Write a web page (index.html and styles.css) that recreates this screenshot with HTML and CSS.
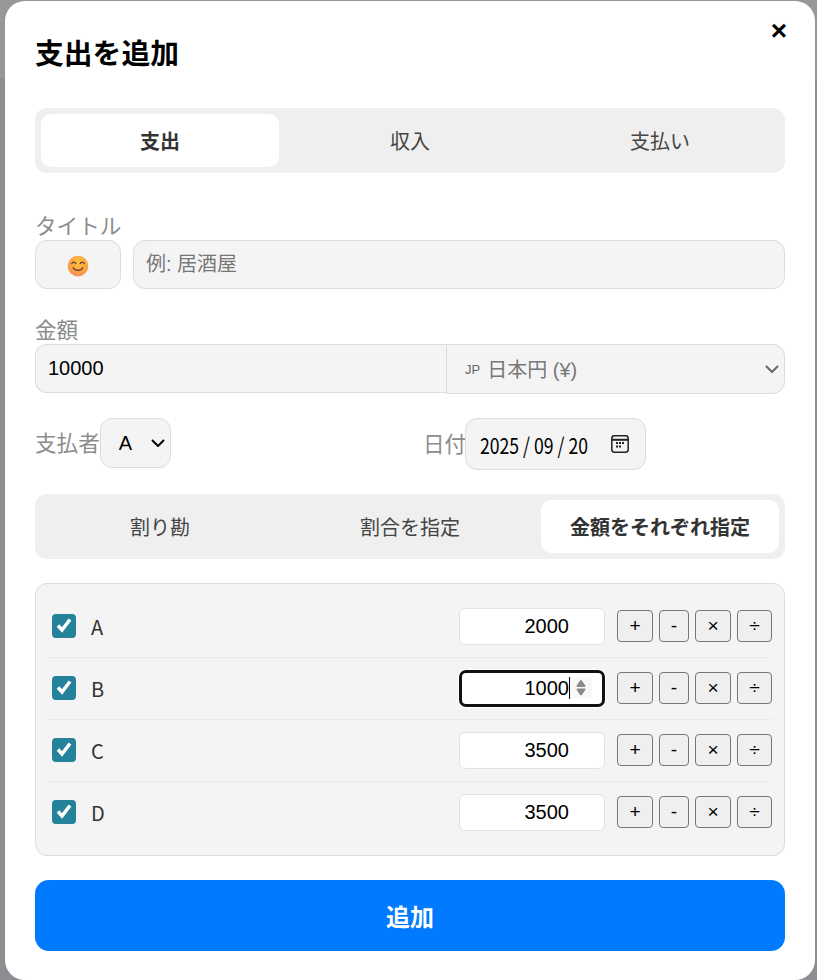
FILE: index.html
```html
<!DOCTYPE html>
<html lang="ja">
    <head>
        <meta charset="UTF-8" />
        <title>支出を追加</title>
        <link rel="stylesheet" href="styles.css">
    </head>
    <body>
        <div class="modal">
            <button class="close" type="button">×</button>
            <h2 class="modal-title">支出を追加</h2>

            <div class="tabs type-tabs">
                <div class="tab active">支出</div>
                <div class="tab">収入</div>
                <div class="tab">支払い</div>
            </div>

            <label class="field-label title-label">タイトル</label>
            <div class="title-row">
                <button class="emoji-btn" type="button">
                    <svg width="22" height="22" viewBox="0 0 22 22">
                        <defs>
                            <radialGradient id="face" cx="0.55" cy="0.35" r="0.75">
                                <stop offset="0" stop-color="#fdc33c" />
                                <stop offset="0.65" stop-color="#fc9e42" />
                                <stop offset="0.92" stop-color="#f97f5c" />
                                <stop offset="1" stop-color="#f2668c" />
                            </radialGradient>
                        </defs>
                        <circle cx="11" cy="11" r="10.3" fill="url(#face)" />
                        <path d="M4.8 8.6c.9-2 3.1-2 4 0M13.2 8.6c.9-2 3.1-2 4 0" fill="none" stroke="#5b3a45" stroke-width="1.3" stroke-linecap="round" />
                        <path d="M6.2 12.8c1.8 3.4 7.8 3.4 9.6 0" fill="none" stroke="#5b3a45" stroke-width="1.3" stroke-linecap="round" />
                    </svg>
                </button>
                <input class="text-input title-input" type="text" placeholder="例: 居酒屋" />
            </div>

            <label class="field-label amount-label">金額</label>
            <div class="amount-row">
                <input class="text-input amount-input" type="text" value="10000" />
                <div class="currency">
                    <span class="flag">JP</span>
                    <span class="currency-name">日本円 (¥)</span>
                    <svg class="currency-arrow" width="14" height="8" viewBox="0 0 14 8">
                        <path d="M1 1l6 6 6-6" fill="none" stroke="#666" stroke-width="2" />
                    </svg>
                </div>
            </div>

            <div class="payer-row">
                <div class="payer-col">
                    <label class="field-label">支払者</label>
                    <select class="payer"><option>A</option><option>B</option></select>
                </div>
                <div class="date-col">
                    <label class="field-label">日付</label>
                    <div class="date">
                        <span class="date-text">2025<span class="date-sep">/</span>09<span class="date-sep">/</span>20</span>
                        <svg class="date-icon" width="18" height="18" viewBox="0 0 18 18">
                            <rect x="0.8" y="0.8" width="16.4" height="16.4" rx="2.6" fill="none" stroke="#222" stroke-width="1.5" />
                            <path d="M1 4.8h16" stroke="#222" stroke-width="2" />
                            <path d="M5 8h2M8 8h2M11 8h2M5 11.5h2M8 11.5h2" stroke="#222" stroke-width="1.8" />
                        </svg>
                    </div>
                </div>
            </div>

            <div class="tabs split-tabs">
                <div class="tab">割り勘</div>
                <div class="tab">割合を指定</div>
                <div class="tab active">金額をそれぞれ指定</div>
            </div>

            <div class="members">
                <div class="member">
                    <input class="check" type="checkbox" checked />
                    <span class="member-name">A</span>
                    <div class="share-box">
                        <input class="share" type="number" value="2000" />
                    </div>
                    <div class="ops">
                        <button class="op" type="button">+</button>
                        <button class="op op-small" type="button">-</button>
                        <button class="op" type="button">×</button>
                        <button class="op" type="button">÷</button>
                    </div>
                </div>
                <div class="member">
                    <input class="check" type="checkbox" checked />
                    <span class="member-name">B</span>
                    <div class="share-box">
                        <input class="share" type="number" value="1000" autofocus />
                        <span class="caret"></span>
                        <svg class="spinner" width="22" height="21" viewBox="0 0 22 21">
                            <path d="M7.5 9h7l-3.5-5zM7.5 12.5h7l-3.500 5z" fill="#8a8a8a" stroke="#8a8a8a" stroke-width="2" stroke-linejoin="round" />
                        </svg>
                    </div>
                    <div class="ops">
                        <button class="op" type="button">+</button>
                        <button class="op op-small" type="button">-</button>
                        <button class="op" type="button">×</button>
                        <button class="op" type="button">÷</button>
                    </div>
                </div>
                <div class="member">
                    <input class="check" type="checkbox" checked />
                    <span class="member-name">C</span>
                    <div class="share-box">
                        <input class="share" type="number" value="3500" />
                    </div>
                    <div class="ops">
                        <button class="op" type="button">+</button>
                        <button class="op op-small" type="button">-</button>
                        <button class="op" type="button">×</button>
                        <button class="op" type="button">÷</button>
                    </div>
                </div>
                <div class="member">
                    <input class="check" type="checkbox" checked />
                    <span class="member-name">D</span>
                    <div class="share-box">
                        <input class="share" type="number" value="3500" />
                    </div>
                    <div class="ops">
                        <button class="op" type="button">+</button>
                        <button class="op op-small" type="button">-</button>
                        <button class="op" type="button">×</button>
                        <button class="op" type="button">÷</button>
                    </div>
                </div>
            </div>

            <button class="submit" type="button">追加</button>
        </div>
    </body>
</html>
```

FILE: styles.css
```css
* {
    box-sizing: border-box;
}

html,
body {
    height: 100%;
}

body {
    margin: 0;
    overflow: hidden;
    background: linear-gradient(#979797 78px, #8d8e91 78px);
    font-family: "Liberation Sans", "Noto Sans CJK JP", sans-serif;
    padding: 1px 2px 0 5px;
}

.modal {
    position: relative;
    background-color: #fff;
    border-radius: 20px;
    height: 979px;
    padding: 30px;
}

.close {
    position: absolute;
    top: 16px;
    right: 22px;
    width: 28px;
    height: 28px;
    padding: 0;
    border: none;
    background: none;
    color: #000;
    font-size: 28px;
    font-weight: 700;
    line-height: 28px;
}

.modal-title {
    margin: 4px 0 39px;
    height: 34px;
    font-family: "Noto Sans CJK JP", sans-serif;
    font-size: 28.8px;
    line-height: 34px;
    font-weight: 700;
    color: #000;
}

/* Segmented tabs */
.tabs {
    display: grid;
    grid-template-columns: repeat(3, 1fr);
    gap: 12px;
    height: 65px;
    padding: 6px;
    background-color: #efefef;
    border-radius: 12px;
}

.tab {
    display: flex;
    align-items: center;
    justify-content: center;
    border-radius: 10px;
    font-family: "Noto Sans CJK JP", sans-serif;
    font-size: 20px;
    color: #444;
}

.tab.active {
    background-color: #fff;
    color: #333;
    font-weight: 700;
}

.field-label {
    display: block;
    font-family: "Noto Sans CJK JP", sans-serif;
    font-size: 21.6px;
    line-height: 26px;
    color: #8c8c8c;
}

.title-label {
    margin-top: 39px;
    margin-bottom: 2px;
}

.title-row {
    display: flex;
    gap: 12px;
}

.emoji-btn {
    display: flex;
    align-items: center;
    justify-content: center;
    width: 86px;
    height: 49px;
    padding: 2px 0 0;
    border: 1px solid #dcdcdc;
    border-radius: 12px;
    background-color: #f4f4f4;
}

.text-input {
    height: 49px;
    padding: 0 12px;
    border: 1px solid #dcdcdc;
    background-color: #f4f4f4;
    font-family: "Liberation Sans", "Noto Sans CJK JP", sans-serif;
    font-size: 20px;
    color: #000;
}

.text-input::placeholder {
    color: #777;
}

.title-input {
    flex: 1;
    min-width: 0;
    border-radius: 12px;
}

.amount-label {
    margin-top: 27px;
    margin-bottom: 2px;
}

.amount-row {
    display: flex;
}

.amount-input {
    width: 411px;
    border-right: none;
    border-radius: 12px 0 0 12px;
}

.currency {
    flex: 1;
    display: flex;
    align-items: center;
    min-width: 0;
    height: 50px;
    padding: 0 5px 2px 18px;
    border: 1px solid #dcdcdc;
    border-radius: 0 12px 12px 0;
    background-color: #f4f4f4;
    font-size: 20px;
    color: #777;
}

.flag {
    margin-right: 7px;
    padding-top: 2px;
    font-size: 13px;
    color: #666;
}

.currency-name {
    flex: 1;
}

.currency-arrow {
    margin-top: 2px;
}

.payer-row {
    display: grid;
    grid-template-columns: 388px 1fr;
    margin-top: 24px;
}

.payer-col,
.date-col {
    display: flex;
    align-items: center;
    height: 52px;
}

.payer-col {
    align-items: flex-start;
}

.payer-col .field-label {
    margin-top: 11px;
}

.date-col .field-label {
    margin-right: -1px;
    margin-bottom: 2px;
}

.payer {
    appearance: none;
    width: 71px;
    height: 50px;
    padding: 0 0 0 18px;
    border: 1px solid #dcdcdc;
    border-radius: 12px;
    background: #f4f4f4 url("data:image/svg+xml,%3Csvg xmlns='http://www.w3.org/2000/svg' width='14' height='8'%3E%3Cpath d='M1 1l6 6 6-6' fill='none' stroke='%23000' stroke-width='2'/%3E%3C/svg%3E") no-repeat right 5px center;
    font-family: "Liberation Sans", sans-serif;
    font-size: 20px;
    color: #000;
}

.date {
    display: flex;
    align-items: center;
    justify-content: space-between;
    width: 181px;
    height: 52px;
    padding: 0 16px 0 14px;
    border: 1px solid #dcdcdc;
    border-radius: 12px;
    background-color: #f4f4f4;
    color: #000;
}

/* the digits in the date field are narrow */
.date-text {
    flex: none;
    width: 110px;
    white-space: nowrap;
    font-family: "Noto Sans CJK JP", sans-serif;
    font-size: 22px;
    transform: scaleX(0.8);
    transform-origin: left center;
}

.date-sep {
    margin: 0 5px;
}

.date-icon {
    flex: none;
}

.split-tabs {
    margin-top: 24px;
}

/* Member list */
.members {
    margin-top: 24px;
    height: 273px;
    padding: 12px;
    border: 1px solid #dcdcdc;
    border-radius: 12px;
    background-color: #f4f4f4;
}

.member {
    display: flex;
    align-items: center;
    height: 62px;
    padding: 0 0 0 4px;
    border-bottom: 1px solid #ebebeb;
}

.member:last-child {
    border-bottom-color: transparent;
}

.check {
    appearance: none;
    width: 24px;
    height: 24px;
    margin: 0 15px 2px 0;
    border-radius: 4px;
    background: #24829a url("data:image/svg+xml,%3Csvg xmlns='http://www.w3.org/2000/svg' width='24' height='24'%3E%3Cpath d='M6 11.500l4 4.500 8-10.500' fill='none' stroke='%23fff' stroke-width='3.500'/%3E%3C/svg%3E") no-repeat center;
}

.member-name {
    flex: 1;
    font-family: "Noto Sans CJK JP", sans-serif;
    font-size: 20px;
    color: #333;
}

.share-box {
    position: relative;
    margin-right: 12px;
}

.share {
    display: block;
    width: 146px;
    height: 37px;
    padding: 0 35px 0 10px;
    border: 1px solid #e2e2e2;
    border-radius: 6px;
    background-color: #fff;
    font-family: "Liberation Sans", sans-serif;
    font-size: 20px;
    text-align: right;
    color: #000;
    caret-color: transparent;
}

.share::-webkit-inner-spin-button {
    appearance: none;
    margin: 0;
}

.share:focus {
    outline: none;
    padding-right: 33px;
    border: 3px solid #111;
    border-radius: 7px;
    box-shadow: 0 0 0 1px #fff;
}

.caret {
    position: absolute;
    top: 7px;
    left: 110px;
    width: 1px;
    height: 22px;
    background-color: #000;
}

.spinner {
    position: absolute;
    top: 7px;
    left: 111px;
    background-color: #f8f8f8;
}

.ops {
    display: flex;
    gap: 6px;
    margin-bottom: 1px;
}

.op {
    width: 36px;
    height: 32px;
    padding: 0;
    border: 1px solid #767676;
    border-radius: 4px;
    background-color: #efefef;
    font-family: "Liberation Sans", sans-serif;
    font-size: 19.2px;
    color: #000;
}

.op-small {
    width: 30px;
}

.op:last-child {
    width: 35px;
}

.submit {
    display: block;
    width: 100%;
    height: 71px;
    margin-top: 24px;
    border: none;
    border-radius: 14px;
    background-color: #007bff;
    color: #fff;
    font-family: "Noto Sans CJK JP", sans-serif;
    font-size: 24px;
    font-weight: 700;
}
```
